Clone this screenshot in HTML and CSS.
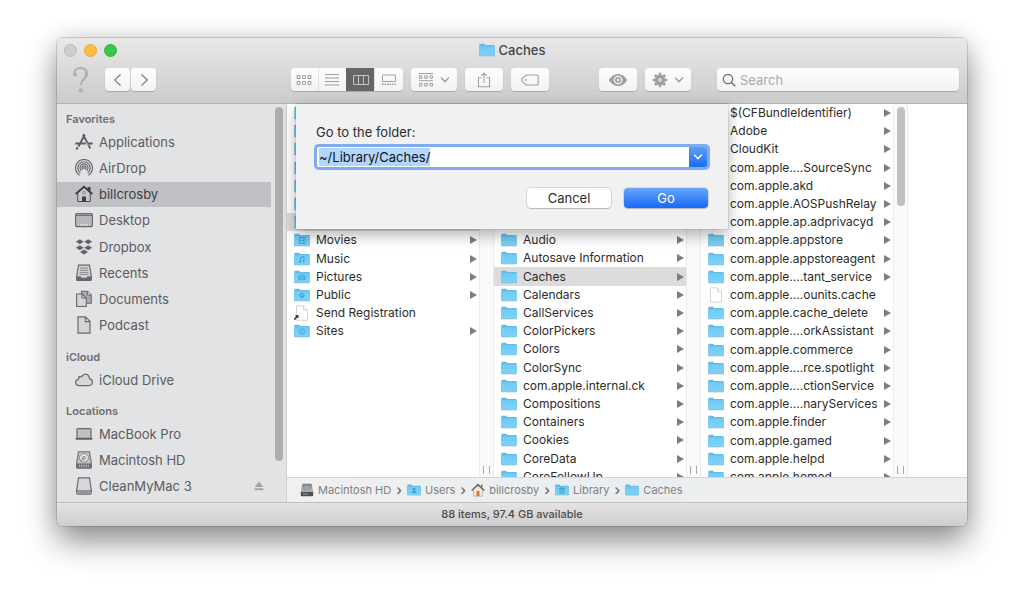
FILE: index.html
```html
<!DOCTYPE html>
<html lang="en">
<head>
<meta charset="utf-8">
<title>Caches</title>
<link rel="stylesheet" href="styles.css">
</head>
<body>
<svg class="sprite" aria-hidden="true">
  <defs>
    <linearGradient id="blue" x1="0" y1="0" x2="0" y2="1"><stop offset="0" stop-color="#6fcbf4"/><stop offset="1" stop-color="#7fd1f8"/></linearGradient>
    <linearGradient id="disk" x1="0" y1="0" x2="0" y2="1"><stop offset="0" stop-color="#777c7e"/><stop offset="1" stop-color="#b9bebf"/></linearGradient>
  </defs>
  <symbol id="folder" viewBox="0 0 16 14"><path d="M.3 1.800Q.3.800 1.300.800H5l1.200 1.300h8.800q.7 0 .7.8V12.800H.3z" fill="#5fbbe6"/><path d="M.3 3.200h15.400V12.800H.3z" fill="url(#blue)"/><path d="M.3 12.900h15.400" stroke="#8fbcd2" stroke-width=".7"/></symbol>
  <symbol id="f-movies" viewBox="0 0 16 14"><use href="#folder"/><path d="M5 4.500h6v6H5zM6.500 4.500v6M9.500 4.500v6M6.500 7.500h3" fill="none" stroke="#419fd0" stroke-width=".8"/></symbol>
  <symbol id="f-music" viewBox="0 0 16 14"><use href="#folder"/><path d="M6.500 9.800V5.200l3.500-.8v4.500M6.500 6l3.500-.8" fill="none" stroke="#419fd0" stroke-width=".8"/><circle cx="5.800" cy="10" r="1" fill="#419fd0"/><circle cx="9.300" cy="9.200" r="1" fill="#419fd0"/></symbol>
  <symbol id="f-pictures" viewBox="0 0 16 14"><use href="#folder"/><path d="M4.500 5.500h1.800l.7-1h2l.7 1h1.800v4.800h-7z" fill="#4ca9d8"/><circle cx="8" cy="7.700" r="1.500" fill="none" stroke="#83d0f4" stroke-width=".7"/></symbol>
  <symbol id="f-public" viewBox="0 0 16 14"><use href="#folder"/><path d="M8 4.300l3.200 3.200L8 10.700 4.800 7.500z" fill="#4ca9d8"/><circle cx="8" cy="7.300" r=".9" fill="#7dcff5"/></symbol>
  <symbol id="f-sites" viewBox="0 0 16 14"><use href="#folder"/><circle cx="8" cy="7.600" r="2.900" fill="none" stroke="#419fd0" stroke-width=".8"/><path d="M6.500 9.200l1-2 2-1.200-1 2z" fill="#419fd0"/></symbol>
  <symbol id="f-users" viewBox="0 0 16 14"><use href="#folder"/><circle cx="8" cy="6" r="1.500" fill="#3d9ccc"/><path d="M5 10.500q.3-2.500 3-2.700 2.700.2 3 2.700z" fill="#3d9ccc"/></symbol>
  <symbol id="f-library" viewBox="0 0 16 14"><use href="#folder"/><path d="M8 4l3 1.500H5zM5 10.500h6M5.800 6v4M8 6v4M10.200 6v4" fill="#3d9ccc" stroke="#3d9ccc" stroke-width=".9"/></symbol>
  <symbol id="file" viewBox="0 0 16 16"><path d="M2.500.8h7l4 4v10.400h-11z" fill="#fff" stroke="#c9c9c9" stroke-width=".8"/><path d="M9.500.8v4h4" fill="#f3f3f3" stroke="#c9c9c9" stroke-width=".8"/></symbol>
  <symbol id="alias" viewBox="0 0 16 16"><use href="#file"/><path d="M0 15q0-2.500 2-3.600L1.200 10l3.600.3-.6 3.500-.9-1.300Q1.500 13.400 1.400 15z" fill="#333"/></symbol>
  <symbol id="hd-color" viewBox="0 0 14 14"><path d="M2.500.8h9l1.700 8H.8z" fill="url(#disk)"/><path d="M.8 8.800h12.400v3.600q0 .8-.8.800H1.600q-.8 0-.8-.8z" fill="#4c5052"/><path d="M3 11h5" stroke="#8f9496"/><ellipse cx="7" cy="5" rx="3.500" ry="2.600" fill="#9da3a4"/></symbol>
  <symbol id="home-color" viewBox="0 0 14 14"><path d="M2.500 6.500v6.700h9V6.500L7 2.500z" fill="#ece8e1" stroke="#aaa49b" stroke-width=".6"/><path d="M10 1.500h1.500v3L10 3.500z" fill="#8d6a53"/><path d="M.7 7.500L7 1.600l6.300 5.900" fill="none" stroke="#806153" stroke-width="1.500"/><path d="M5.500 8h3v5.200h-3z" fill="#e6791f"/></symbol>
  <symbol id="s-apps" viewBox="0 0 18 18"><g fill="none" stroke="#5c5d61" stroke-width="1.900"><path d="M9.800 1.500L3.500 13.500M8 1.500l7.300 14M.3 10.500h10.500M13.500 10.500h4.200"/><path d="M2.700 14.300l-1.300 2.200"/></g><path d="M11 9.200l3 3.800" stroke="#e2e3e5" stroke-width=".6"/></symbol>
  <symbol id="s-airdrop" viewBox="0 0 18 18"><g fill="none" stroke="#68696d" stroke-width="1.200"><path d="M4.500 16.200a8.500 8.500 0 1 1 9 0"/><path d="M5.400 14a6.200 6.200 0 1 1 7.200 0"/><path d="M6.400 11.900a4 4 0 1 1 5.200 0"/><path d="M7.800 10.400a2 2 0 1 1 2.400 0"/></g><circle cx="9" cy="9" r=".9" fill="#68696d"/></symbol>
  <symbol id="s-home" viewBox="0 0 18 18"><path d="M12.500 2h3v5l-3-2.500z" fill="#3f4043"/><path d="M2.800 8v8.500h12.400V8L9 2.500z" fill="#cacbce" stroke="#4a4b4f" stroke-width="1"/><path d="M.7 9L9 1.600 17.300 9" fill="none" stroke="#3f4043" stroke-width="1.700"/><circle cx="9" cy="7.800" r="1.400" fill="none" stroke="#77787b" stroke-width=".8"/><path d="M7 11.500h4v5H7z" fill="#3f4043"/></symbol>
  <symbol id="s-desktop" viewBox="0 0 18 18"><rect x=".6" y="2.600" width="16.800" height="13" rx="1.200" fill="#b7b8bb" stroke="#68696d" stroke-width="1.200"/><path d="M1 4.400h16" stroke="#68696d"/><path d="M5 13.800h8" stroke="#f2f2f3" stroke-width="1.300" stroke-dasharray="1.300 .9"/></symbol>
  <symbol id="s-dropbox" viewBox="0 0 18 18"><path d="M4.800 1.300l4 2.500-4 2.500-4-2.500zM13.200 1.300l4 2.500-4 2.500-4-2.500zM4.800 7.300l4 2.500-4 2.500-4-2.500zM13.200 7.300l4 2.500-4 2.500-4-2.500zM9 11.500l4 2.600-4 2.500-4-2.500z" fill="#636468"/></symbol>
  <symbol id="s-recents" viewBox="0 0 18 18"><path d="M3.500 1.200h11L16.300 12v3.500q0 1-1 1H2.700q-1 0-1-1V12z" fill="#d4d5d7" stroke="#68696d" stroke-width="1.200"/><path d="M1.700 12.200h3.800l1.200 1.600h4.600l1.200-1.600h3.800v3.600q0 .7-.8.700h-13q-.8 0-.8-.7z" fill="#68696d"/><path d="M5 4h8M4.800 6.200h8.400M4.500 8.400h9M4.300 10.400h9.400" stroke="#7c7d80" stroke-width=".9"/></symbol>
  <symbol id="s-docs" viewBox="0 0 18 18"><path d="M6.500 1.200h6l3.800 3.800v8.200H6.500z" fill="#a9aaad" stroke="#68696d" stroke-width="1.100"/><path d="M12.300 1.200v4h4" fill="#d5d6d8" stroke="#68696d"/><path d="M1.600 4h5.500l4.200 4v8.500H1.600z" fill="#d4d5d7" stroke="#68696d" stroke-width="1.100"/><path d="M7 4v4.200h4.300" fill="none" stroke="#68696d"/></symbol>
  <symbol id="s-doc" viewBox="0 0 18 18"><path d="M3 .8h7.500L15 5.400v11.800H3z" fill="#d4d5d7" stroke="#68696d" stroke-width="1.200"/><path d="M10.300 1v4.600H15" fill="none" stroke="#68696d" stroke-width="1.100"/></symbol>
  <symbol id="s-cloud" viewBox="0 0 18 18"><path d="M4.500 14.600Q.6 14.600.6 11.300q0-2.600 2.800-3-.2-2.700 2.100-3 .8 0 1.400.3Q8 3.100 10.600 3.200q3.600.4 3.800 4.400 3 .5 3 3.500 0 3.500-3.600 3.500z" fill="#d6d7d9" stroke="#68696d" stroke-width="1.200"/></symbol>
  <symbol id="s-laptop" viewBox="0 0 18 18"><rect x="2" y="3.600" width="14" height="9.800" rx="1" fill="#bfc0c2" stroke="#68696d" stroke-width="1.200"/><path d="M.3 13h17.400l-.7 1.700H1z" fill="#5c5d61"/></symbol>
  <symbol id="s-hd" viewBox="0 0 18 18"><path d="M3.500.8h11l1.800 11.500v4q0 1-1 1H2.700q-1 0-1-1v-4z" fill="#c4c5c7" stroke="#68696d" stroke-width="1.100"/><path d="M1.700 12.500h14.600v4.300H1.700z" fill="#68696d"/><path d="M4 14.800h9.800" stroke="#c4c5c7" stroke-width="2" stroke-dasharray="1 .8"/><ellipse cx="9" cy="6.800" rx="4.600" ry="4.300" fill="#dedfe1" stroke="#7d7e81" stroke-width=".8"/><circle cx="9" cy="7" r="1.400" fill="none" stroke="#7d7e81" stroke-width=".9"/><path d="M5 10.500l3-2.500" stroke="#7d7e81"/></symbol>
  <symbol id="s-drive" viewBox="0 0 18 18"><path d="M3.500.8h11l1.800 12.500v2.500q0 1.300-1.300 1.300H3q-1.300 0-1.300-1.300v-2.500z" fill="#d6d7d9" stroke="#68696d" stroke-width="1.200"/><path d="M1.800 14h14.400" stroke="#68696d" stroke-width="1.200"/><path d="M3.500 15.600h11" stroke="#68696d" stroke-width=".8"/></symbol>
  <symbol id="chev" viewBox="0 0 10 10"><path d="M1.500 3l3.500 3.700L8.500 3" fill="none" stroke="currentColor" stroke-width="1.500" stroke-linecap="round"/></symbol>
  <symbol id="nine" viewBox="0 0 16 12"><path d="M1 1.500h3v3H1zM6.500 1.500h3v3h-3zM12 1.500h3v3h-3zM1 7.500h3v3H1zM6.500 7.500h3v3h-3zM12 7.500h3v3h-3z" fill="none" stroke="currentColor" stroke-linejoin="round"/></symbol>
</svg>

<main class="window">
  <header class="titlebar">
    <div class="title-row">
      <div class="lights">
        <button class="light" aria-label="Close"></button>
        <button class="light amber" aria-label="Minimize"></button>
        <button class="light green" aria-label="Zoom"></button>
      </div>
      <h1 class="title"><svg class="icon"><use href="#folder"/></svg>Caches</h1>
    </div>
    <div class="toolbar">
      <svg class="help" viewBox="0 0 20 28"><path d="M3.300 8.200Q3 2 9.800 2q6.200.3 6.200 5.700 0 3-2.800 5.200-2.900 2.200-3.100 6.100" fill="none" stroke="#b1b1b1" stroke-width="2"/><path d="M14 3.500q3.300 4-.5 8.500" fill="none" stroke="#b1b1b1" stroke-width="2.600"/><circle cx="3.900" cy="8.600" r="2" fill="#b1b1b1"/><circle cx="10" cy="24.500" r="2.300" fill="#b1b1b1"/></svg>
      <div class="nav">
        <button class="btn" aria-label="Back"><svg class="nav-icon" viewBox="0 0 12 14"><path d="M8.500 1.500L2.800 7l5.700 5.500" fill="none" stroke="#8d8d8d" stroke-width="1.500"/></svg></button>
        <button class="btn" aria-label="Forward"><svg class="nav-icon" viewBox="0 0 12 14"><path d="M3.500 1.500L9.200 7l-5.700 5.500" fill="none" stroke="#8d8d8d" stroke-width="1.500"/></svg></button>
      </div>
      <div class="space wide"></div>
      <div class="tools">
        <div class="segments">
          <button class="seg" aria-label="Icon view"><svg class="glyph"><use href="#nine"/></svg></button>
          <button class="seg" aria-label="List view"><svg class="glyph" viewBox="0 0 16 12"><path d="M1 .5h14M1 4h14M1 7.500h14M1 11h14" stroke="currentColor"/></svg></button>
          <button class="seg on" aria-label="Column view"><svg class="glyph" viewBox="0 0 16 12"><path d="M.5 1.500h15v9H.5zM5.500 1.500v9M10.500 1.500v9" fill="none" stroke="currentColor"/></svg></button>
          <button class="seg" aria-label="Gallery view"><svg class="glyph" viewBox="0 0 16 12"><rect x="1.500" y="1" width="13" height="6.500" rx=".5" fill="none" stroke="currentColor"/><path d="M1 10.200h14" stroke="currentColor" stroke-width="1.600" stroke-dasharray="1.600 .9"/></svg></button>
        </div>
        <button class="btn menu" aria-label="Group"><svg class="glyph tall" viewBox="0 0 16 16"><path d="M1 1.500h14M1 8.700h14" stroke="currentColor"/><path d="M1.500 3.800h2.500v2.500H1.500zM6.700 3.800h2.500v2.500H6.700zM12 3.800h2.500v2.500H12zM1.500 11.500h2.500V14H1.500zM6.700 11.500h2.500V14H6.700zM12 11.500h2.500V14H12z" fill="none" stroke="currentColor" stroke-linejoin="round"/></svg><svg class="chev"><use href="#chev"/></svg></button>
        <button class="btn" aria-label="Share"><svg class="glyph tall" viewBox="0 0 16 16"><path d="M5.500 5.800h-3v9h11v-9h-3M8 11V1.200M5.200 3.800L8 1l2.800 2.800" fill="none" stroke="currentColor" stroke-width="1.100"/></svg></button>
        <button class="btn" aria-label="Tags"><svg class="glyph wide" viewBox="0 0 18 12"><path d="M5.300 1h10.900q1 0 1 1v8q0 1-1 1H5.300L1 7.300Q.4 6 1 4.700z" fill="none" stroke="currentColor" stroke-width="1.100"/><circle cx="4.700" cy="6" r="1" fill="currentColor"/></svg></button>
      </div>
      <div class="space"></div>
      <div class="tools">
        <button class="btn" aria-label="Quick Look"><svg class="glyph eye" viewBox="0 0 20 14"><path d="M.7 7Q4.500 1 10 1t9.300 6q-3.800 6-9.300 6T.7 7z" fill="currentColor"/><circle cx="10" cy="7" r="3.700" fill="none" stroke="#f7f7f7" stroke-width="1.300"/><circle cx="10" cy="7" r="1.200" fill="#f7f7f7"/></svg></button>
        <button class="btn menu" aria-label="Action"><svg class="glyph tall" viewBox="0 0 16 16"><path d="M8 .8v14.400M.8 8h14.400M2.900 2.900l10.200 10.200M13.100 2.900L2.900 13.100" stroke="currentColor" stroke-width="2.600"/><circle cx="8" cy="8" r="3.500" fill="#f7f7f7" stroke="currentColor" stroke-width="3.600"/><circle cx="8" cy="8" r="1" fill="currentColor" opacity=".5"/></svg><svg class="chev"><use href="#chev"/></svg></button>
      </div>
      <label class="search"><svg class="search-icon" viewBox="0 0 14 14"><circle cx="6" cy="6" r="4.700" fill="none" stroke="#6a6a6a" stroke-width="1.200"/><path d="M9.400 9.400l3.900 3.900" stroke="#6a6a6a" stroke-width="1.400"/></svg><input class="search-input" type="text" placeholder="Search" aria-label="Search"></label>
    </div>
  </header>

  <div class="body">
    <nav class="sidebar">
      <div class="places">
        <h2 class="group">Favorites</h2>
        <ul class="place-list eight">
          <li><a class="place" href="#"><svg class="place-icon"><use href="#s-apps"/></svg>Applications</a></li>
          <li><a class="place" href="#"><svg class="place-icon"><use href="#s-airdrop"/></svg>AirDrop</a></li>
          <li><a class="place current" href="#"><svg class="place-icon"><use href="#s-home"/></svg>billcrosby</a></li>
          <li><a class="place" href="#"><svg class="place-icon"><use href="#s-desktop"/></svg>Desktop</a></li>
          <li><a class="place" href="#"><svg class="place-icon"><use href="#s-dropbox"/></svg>Dropbox</a></li>
          <li><a class="place" href="#"><svg class="place-icon"><use href="#s-recents"/></svg>Recents</a></li>
          <li><a class="place" href="#"><svg class="place-icon"><use href="#s-docs"/></svg>Documents</a></li>
          <li><a class="place" href="#"><svg class="place-icon"><use href="#s-doc"/></svg>Podcast</a></li>
        </ul>
        <h2 class="group">iCloud</h2>
        <ul class="place-list">
          <li><a class="place" href="#"><svg class="place-icon"><use href="#s-cloud"/></svg>iCloud Drive</a></li>
        </ul>
        <h2 class="group">Locations</h2>
        <ul class="place-list">
          <li><a class="place" href="#"><svg class="place-icon"><use href="#s-laptop"/></svg>MacBook Pro</a></li>
          <li><a class="place" href="#"><svg class="place-icon"><use href="#s-hd"/></svg>Macintosh HD</a></li>
          <li class="ejectable"><a class="place" href="#"><svg class="place-icon"><use href="#s-drive"/></svg>CleanMyMac 3</a><button class="eject" aria-label="Eject"><svg class="eject-icon" viewBox="0 0 10 10"><path d="M5 .5L9.300 6H.7zM.7 7.300h8.600v2H.7z" fill="#a3a4a7"/></svg></button></li>
        </ul>
      </div>
      <div class="side-scroll"></div>
    </nav>

    <section class="content">
      <div class="columns">
        <div class="column">
          <ul class="files">
            <li class="row"><svg class="icon"><use href="#folder"/></svg></li>
            <li class="row"><svg class="icon"><use href="#folder"/></svg></li>
            <li class="row"><svg class="icon"><use href="#folder"/></svg></li>
            <li class="row"><svg class="icon"><use href="#folder"/></svg></li>
            <li class="row"><svg class="icon"><use href="#folder"/></svg></li>
            <li class="row"><svg class="icon"><use href="#folder"/></svg></li>
            <li class="row picked"><svg class="icon"><use href="#f-library"/></svg></li>
            <li class="row dir"><svg class="icon"><use href="#f-movies"/></svg>Movies</li>
            <li class="row dir"><svg class="icon"><use href="#f-music"/></svg>Music</li>
            <li class="row dir"><svg class="icon"><use href="#f-pictures"/></svg>Pictures</li>
            <li class="row dir"><svg class="icon"><use href="#f-public"/></svg>Public</li>
            <li class="row"><svg class="icon"><use href="#alias"/></svg>Send Registration</li>
            <li class="row dir"><svg class="icon"><use href="#f-sites"/></svg>Sites</li>
          </ul>
          <div class="gutter"></div>
        </div>
        <div class="column">
          <ul class="files below-sheet">
            <li class="row dir"><svg class="icon"><use href="#folder"/></svg>Audio</li>
            <li class="row dir"><svg class="icon"><use href="#folder"/></svg>Autosave Information</li>
            <li class="row dir picked"><svg class="icon"><use href="#folder"/></svg>Caches</li>
            <li class="row dir"><svg class="icon"><use href="#folder"/></svg>Calendars</li>
            <li class="row dir"><svg class="icon"><use href="#folder"/></svg>CallServices</li>
            <li class="row dir"><svg class="icon"><use href="#folder"/></svg>ColorPickers</li>
            <li class="row dir"><svg class="icon"><use href="#folder"/></svg>Colors</li>
            <li class="row dir"><svg class="icon"><use href="#folder"/></svg>ColorSync</li>
            <li class="row dir"><svg class="icon"><use href="#folder"/></svg>com.apple.internal.ck</li>
            <li class="row dir"><svg class="icon"><use href="#folder"/></svg>Compositions</li>
            <li class="row dir"><svg class="icon"><use href="#folder"/></svg>Containers</li>
            <li class="row dir"><svg class="icon"><use href="#folder"/></svg>Cookies</li>
            <li class="row dir"><svg class="icon"><use href="#folder"/></svg>CoreData</li>
            <li class="row dir"><svg class="icon"><use href="#folder"/></svg>CoreFollowUp</li>
          </ul>
          <div class="gutter"></div>
        </div>
        <div class="column">
          <ul class="files">
            <li class="row dir"><svg class="icon"><use href="#folder"/></svg>$(CFBundleIdentifier)</li>
            <li class="row dir"><svg class="icon"><use href="#folder"/></svg>Adobe</li>
            <li class="row dir"><svg class="icon"><use href="#folder"/></svg>CloudKit</li>
            <li class="row dir"><svg class="icon"><use href="#folder"/></svg>com.apple....SourceSync</li>
            <li class="row dir"><svg class="icon"><use href="#folder"/></svg>com.apple.akd</li>
            <li class="row dir"><svg class="icon"><use href="#folder"/></svg>com.apple.AOSPushRelay</li>
            <li class="row dir"><svg class="icon"><use href="#folder"/></svg>com.apple.ap.adprivacyd</li>
            <li class="row dir"><svg class="icon"><use href="#folder"/></svg>com.apple.appstore</li>
            <li class="row dir"><svg class="icon"><use href="#folder"/></svg>com.apple.appstoreagent</li>
            <li class="row dir"><svg class="icon"><use href="#folder"/></svg>com.apple....tant_service</li>
            <li class="row"><svg class="icon"><use href="#file"/></svg>com.apple....ounits.cache</li>
            <li class="row dir"><svg class="icon"><use href="#folder"/></svg>com.apple.cache_delete</li>
            <li class="row dir"><svg class="icon"><use href="#folder"/></svg>com.apple....orkAssistant</li>
            <li class="row dir"><svg class="icon"><use href="#folder"/></svg>com.apple.commerce</li>
            <li class="row dir"><svg class="icon"><use href="#folder"/></svg>com.apple....rce.spotlight</li>
            <li class="row dir"><svg class="icon"><use href="#folder"/></svg>com.apple....ctionService</li>
            <li class="row dir"><svg class="icon"><use href="#folder"/></svg>com.apple....naryServices</li>
            <li class="row dir"><svg class="icon"><use href="#folder"/></svg>com.apple.finder</li>
            <li class="row dir"><svg class="icon"><use href="#folder"/></svg>com.apple.gamed</li>
            <li class="row dir"><svg class="icon"><use href="#folder"/></svg>com.apple.helpd</li>
            <li class="row dir"><svg class="icon"><use href="#folder"/></svg>com.apple.homed</li>
          </ul>
          <div class="gutter"><div class="thumb"></div></div>
        </div>
      </div>
      <nav class="path" aria-label="Path">
        <a class="crumb" href="#"><svg class="crumb-icon"><use href="#hd-color"/></svg>Macintosh HD</a><span class="sep">›</span>
        <a class="crumb" href="#"><svg class="crumb-icon"><use href="#f-users"/></svg>Users</a><span class="sep">›</span>
        <a class="crumb" href="#"><svg class="crumb-icon"><use href="#home-color"/></svg>billcrosby</a><span class="sep">›</span>
        <a class="crumb" href="#"><svg class="crumb-icon"><use href="#f-library"/></svg>Library</a><span class="sep">›</span>
        <a class="crumb" href="#"><svg class="crumb-icon"><use href="#folder"/></svg>Caches</a>
      </nav>
    </section>

    <form class="sheet" role="dialog" aria-labelledby="goto-label">
      <label class="sheet-label" id="goto-label" for="goto">Go to the folder:</label>
      <div class="combo">
        <input class="combo-input" id="goto" type="text" value="~/Library/Caches/" spellcheck="false" autofocus>
        <button class="combo-btn" type="button" aria-label="Recent folders"><svg class="chev"><use href="#chev"/></svg></button>
      </div>
      <div class="actions">
        <button class="action" type="button">Cancel</button>
        <button class="action primary" type="button">Go</button>
      </div>
    </form>
  </div>

  <footer class="status">88 items, 97.4 GB available</footer>
</main>
<script src="app.js"></script>
</body>
</html>
```

FILE: styles.css
```css
* { box-sizing: border-box; }
html { min-height: 100%; background: #fff; }
body {
  margin: 0;
  padding: 38px 57px 74px;
  color: #2b2b2b;
  font: 13px/18px Inter, "Liberation Sans", sans-serif;
}
ul { list-style: none; margin: 0; padding: 0; }
h1, h2 { margin: 0; }
a { color: inherit; text-decoration: none; }
button, input { font: inherit; color: inherit; border: 0; padding: 0; outline: 0; }
.sprite { position: absolute; width: 0; height: 0; }

.window {
  border-radius: 6px;
  box-shadow: 0 0 0 1px rgba(0, 0, 0, .13), 0 16px 32px rgba(0, 0, 0, .42), 0 0 24px rgba(0, 0, 0, .12);
}

.titlebar {
  background: linear-gradient(#e8e8e8, #cbcbcb);
  border-bottom: 1px solid #b1b1b1;
  border-radius: 6px 6px 0 0;
  padding-bottom: 6px;
}
.title-row {
  display: grid;
  grid-template-columns: 1fr auto 1fr;
  align-items: center;
  height: 24px;
}
.lights { display: flex; gap: 7px; padding-left: 7px; }
.light {
  width: 13px;
  height: 13px;
  border-radius: 50%;
  background: #cdcdcd;
  border: 1px solid #bababa;
}
.light.amber { background: #fdbc40; border-color: #eba93a; }
.light.green { background: #34c84a; border-color: #2db541; }
.title {
  display: flex;
  align-items: center;
  gap: 4px;
  font-size: 13px;
  font-weight: 500;
  color: #464646;
}

.toolbar {
  display: flex;
  align-items: center;
  height: 35px;
  padding: 0 8px 0 14px;
}
.help { width: 20px; height: 28px; margin-right: 14px; }
.nav { display: flex; gap: 1px; }
.nav .btn { width: 25px; }
.nav-icon { width: 12px; height: 14px; }
.space { flex: 1 1 50px; }
.space.wide { flex: 1 1 134px; }
.tools { display: flex; gap: 8px; }
.btn, .seg, .search {
  display: flex;
  align-items: center;
  justify-content: center;
  height: 23px;
  background: linear-gradient(#fefefe, #f2f2f2);
  color: #a0a0a0;
}
.btn, .segments, .search {
  border-radius: 4px;
  box-shadow: 0 1px 1px rgba(0, 0, 0, .2);
}
.btn { width: 38px; }
.btn.menu { width: 46px; gap: 6px; }
.segments { display: flex; width: 112px; overflow: hidden; }
.seg { flex: 1; }
.seg + .seg { border-left: 1px solid #e2e2e2; }
.seg.on { background: #666; color: #c2c2c2; border-color: #666; }
.glyph { width: 16px; height: 12px; }
.glyph.tall { height: 16px; }
.glyph.wide { width: 18px; }
.glyph.eye { width: 20px; height: 14px; }
.chev { width: 10px; height: 10px; }
.search {
  width: 242px;
  margin-left: 26px;
  padding: 0 5px;
  gap: 4px;
}
.search-icon { width: 14px; height: 14px; flex: none; }
.search-input { flex: 1; min-width: 0; background: none; color: #333; }
.search-input::placeholder { color: #a9a9a9; opacity: 1; }

.body { position: relative; display: flex; }
.sidebar {
  flex: none;
  display: flex;
  width: 230px;
  background: #e2e3e5;
  border-right: 1px solid #cfd0d2;
}
.places { flex: 1; padding: 5px 0 1px; color: #5a5b5e; }
.group {
  padding-left: 9px;
  font-size: 11px;
  font-weight: 600;
  line-height: 20px;
  color: #6d6e71;
}
.place-list { display: grid; grid-auto-rows: 26px; margin-bottom: 8px; }
.place-list:last-child { margin-bottom: 0; }
.place-list.eight { height: 210px; grid-auto-rows: 1fr; }
.place {
  display: flex;
  align-items: center;
  gap: 6px;
  height: 25px;
  padding-left: 18px;
}
.place.current { background: #c0c1c5; color: #3d3e41; }
.place-icon { width: 18px; height: 18px; }
.ejectable { display: flex; align-items: center; justify-content: space-between; }
.eject { display: flex; margin-right: 7px; background: none; }
.eject-icon { width: 10px; height: 10px; }
.side-scroll {
  width: 8px;
  height: 354px;
  margin: 3px 3px 0 4px;
  border-radius: 4px;
  background: #adaeb0;
}

.content { flex: 1; min-width: 0; display: flex; flex-direction: column; background: #fff; }
.columns { flex: 1 1 373px; display: flex; height: 373px; overflow: hidden; }
.column { flex: none; display: flex; width: 207px; }
.files {
  flex: 1;
  min-width: 0;
  display: grid;
  grid-template-rows: repeat(21, 1fr);
  height: 382px;
  font-size: 12px;
}
.files.below-sheet {
  grid-template-rows: repeat(14, 1fr);
  height: 255px;
  margin-top: 127px;
}
.row {
  display: flex;
  align-items: center;
  gap: 6px;
  padding: 0 2px 0 7px;
  white-space: nowrap;
}
.row.picked { background: #dcdcdc; }
.row.dir::after {
  content: "";
  margin-left: auto;
  border: solid transparent;
  border-width: 4px 0 4px 7px;
  border-left-color: #7d7d7d;
}
.icon { width: 16px; height: 16px; flex: none; }
.gutter {
  display: flex;
  flex-direction: column;
  align-items: center;
  width: 15px;
  height: 373px;
  padding: 3px 0;
  background: #fafafa;
  border: solid #ececec;
  border-width: 0 1px;
}
.gutter::after {
  content: "";
  width: 5px;
  height: 8px;
  margin-top: auto;
  border: solid #a8a8a8;
  border-width: 0 1px;
}
.thumb { width: 8px; height: 99px; border-radius: 4px; background: #c1c1c1; }

.path {
  display: flex;
  align-items: center;
  gap: 5px;
  height: 25px;
  padding-left: 13px;
  border-top: 1px solid #d5d5d5;
  background: linear-gradient(90deg, #f0f0f0, #e9eef1 45%, #eee 70%);
  font-size: 11px;
  color: #808080;
}
.crumb { display: flex; align-items: center; gap: 4px; }
.crumb-icon { width: 14px; height: 14px; }
.sep { font-size: 14px; font-weight: 600; color: #777; }

.status {
  padding: 2px 0 3px;
  border-top: 1px solid #bdbdbd;
  border-radius: 0 0 6px 6px;
  background: linear-gradient(#e4e4e4, #cdcdcd);
  text-align: center;
  font-size: 11px;
  font-weight: 500;
  color: #4b4b4b;
}

.sheet {
  position: absolute;
  top: 0;
  left: 0;
  right: 0;
  width: 432px;
  margin: 0 auto;
  padding: 19px 20px 21px;
  background: #f1f1f1;
  box-shadow: 0 0 1px rgba(0, 0, 0, .4), 0 6px 14px rgba(0, 0, 0, .3);
}
.sheet-label { display: block; }
.combo {
  display: flex;
  height: 20px;
  margin: 6px 1px 0 1px;
  border-radius: 2px;
  background: #fff;
  box-shadow: 0 0 0 3px #7eacef;
}
.combo-input { flex: 1; min-width: 0; padding-left: 2px; background: none; color: #111; }
.combo-input::selection { background: #b2d7fe; color: #111; }
.combo-btn {
  display: flex;
  align-items: center;
  justify-content: center;
  width: 18px;
  border-radius: 0 2px 2px 0;
  background: linear-gradient(#5f9df7, #1b6bf5);
  color: #fff;
}
.actions { display: flex; justify-content: flex-end; gap: 13px; margin-top: 21px; }
.action {
  width: 84px;
  height: 20px;
  border-radius: 4px;
  background: #fff;
  box-shadow: 0 0 0 1px rgba(0, 0, 0, .1), 0 1px 1px rgba(0, 0, 0, .15);
}
.action.primary { background: linear-gradient(#6aa6f8, #1469fb); color: #fff; }
```

FILE: app.js
```js
const field = document.getElementById("goto");
field.focus();
field.select();
```
